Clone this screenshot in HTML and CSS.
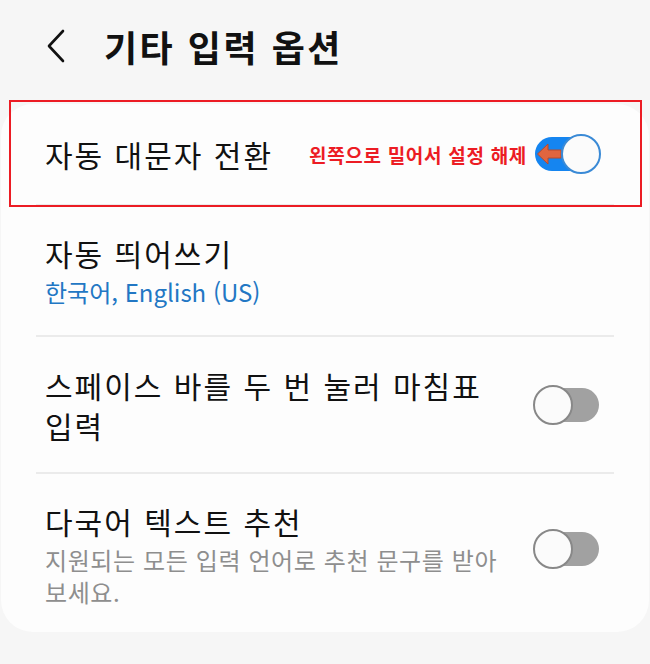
FILE: index.html
```html
<!DOCTYPE html>
<html lang="ko">
<head>
    <meta charset="UTF-8">
    <meta name="viewport" content="width=device-width, initial-scale=1.0">
    <title>기타 입력 옵션</title>
    <link rel="stylesheet" href="styles.css">
</head>
<body>

    <div class="header">
        <svg class="back" width="20" height="34" viewBox="0 0 20 34">
            <polyline points="17,2 3,17 17,32" fill="none" stroke="#111" stroke-width="2.6" stroke-linecap="round" stroke-linejoin="round"/>
        </svg>
        <h1>기타 입력 옵션</h1>
    </div>

    <div class="card">
        <!-- Auto caps, with hint box -->
        <div class="row row-first">
            <div class="texts">
                <div class="title">자동 대문자 전환</div>
            </div>
            <span class="hint">왼쪽으로 밀어서 설정 해제</span>
            <span class="switch on">
                <svg class="arrow" width="26" height="24" viewBox="0 0 26 24">
                    <path d="M1.5,12 L12,2 L12,8 L25,8 L25,16 L12,16 L12,22 Z" fill="#e0653f" stroke="#b84a2c" stroke-width="1" stroke-linejoin="round"/>
                </svg>
                <span class="knob"></span>
            </span>
        </div>
        <div class="divider"></div>

        <div class="row">
            <div class="texts">
                <div class="title">자동 띄어쓰기</div>
                <div class="sub blue">한국어, English (US)</div>
            </div>
        </div>
        <div class="divider"></div>

        <div class="row">
            <div class="texts">
                <div class="title">스페이스 바를 두 번 눌러 마침표<br>입력</div>
            </div>
            <span class="switch"><span class="knob"></span></span>
        </div>
        <div class="divider"></div>

        <div class="row row-last">
            <div class="texts">
                <div class="title">다국어 텍스트 추천</div>
                <div class="sub gray">지원되는 모든 입력 언어로 추천 문구를 받아<br>보세요.</div>
            </div>
            <span class="switch"><span class="knob"></span></span>
        </div>
    </div>

</body>
</html>
```
FILE: styles.css
```css
body {
    margin: 0;
    padding: 0;
    background-color: #f6f6f6;
    font-family: "Noto Sans CJK KR", "Noto Sans", sans-serif;
    color: #111;
}

.header {
    display: flex;
    align-items: center;
    height: 96px;
    padding: 0 0 0 46px;
    box-sizing: border-box;
}

.header .back {
    margin-top: -4px;
}

.header h1 {
    margin: 0 0 0 38px;
    font-size: 36px;
    font-weight: bold;
    letter-spacing: 2.5px;
    margin-top: -4px;
}

.card {
    background-color: #fdfdfd;
    border-radius: 32px;
    margin: 8px 1px 0 1px;
}

.row {
    display: flex;
    align-items: center;
    padding: 0 50px 0 44px;
}

.row-first {
    position: relative;
    height: 100px;
}

/* red annotation frame */
.row-first::after {
    content: "";
    position: absolute;
    left: 8px;
    right: 7px;
    top: -4px;
    bottom: -3px;
    border: 2px solid #ec1c24;
}

.row:nth-child(3) {
    height: 129px;
}

.row:nth-child(5) {
    height: 135px;
}

.row-last {
    height: 158px;
    align-items: flex-start;
    padding-top: 27px;
    box-sizing: border-box;
}

.row-last .switch {
    margin-top: 31px;
}

.texts {
    flex: 1;
}

.title {
    font-size: 30px;
    line-height: 40px;
    letter-spacing: 2px;
}

.sub {
    font-size: 24px;
    line-height: 32px;
    margin-top: 3px;
}

.blue {
    color: #2277c4;
}

.gray {
    color: #8e8e8e;
    letter-spacing: 0.6px;
}

.hint {
    color: #ec1c24;
    font-size: 19px;
    font-weight: bold;
    letter-spacing: 0.7px;
    margin-right: 8px;
}

.divider {
    height: 2px;
    background-color: #ebebeb;
    margin: 0 35px;
}

/* switches */
.switch {
    position: relative;
    display: inline-block;
    width: 64px;
    height: 34px;
    border-radius: 17px;
    background-color: #a1a1a1;
    flex-shrink: 0;
}

.switch .knob {
    position: absolute;
    top: -3px;
    left: -2px;
    width: 36px;
    height: 36px;
    border-radius: 50%;
    background-color: #fbfbfb;
    border: 2px solid #888;
}

.switch.on {
    background-color: #1585f0;
}

.switch.on .knob {
    left: auto;
    right: -2px;
    border-color: #3a8ad6;
}

.switch .arrow {
    position: absolute;
    left: 1px;
    top: 5px;
}
```
